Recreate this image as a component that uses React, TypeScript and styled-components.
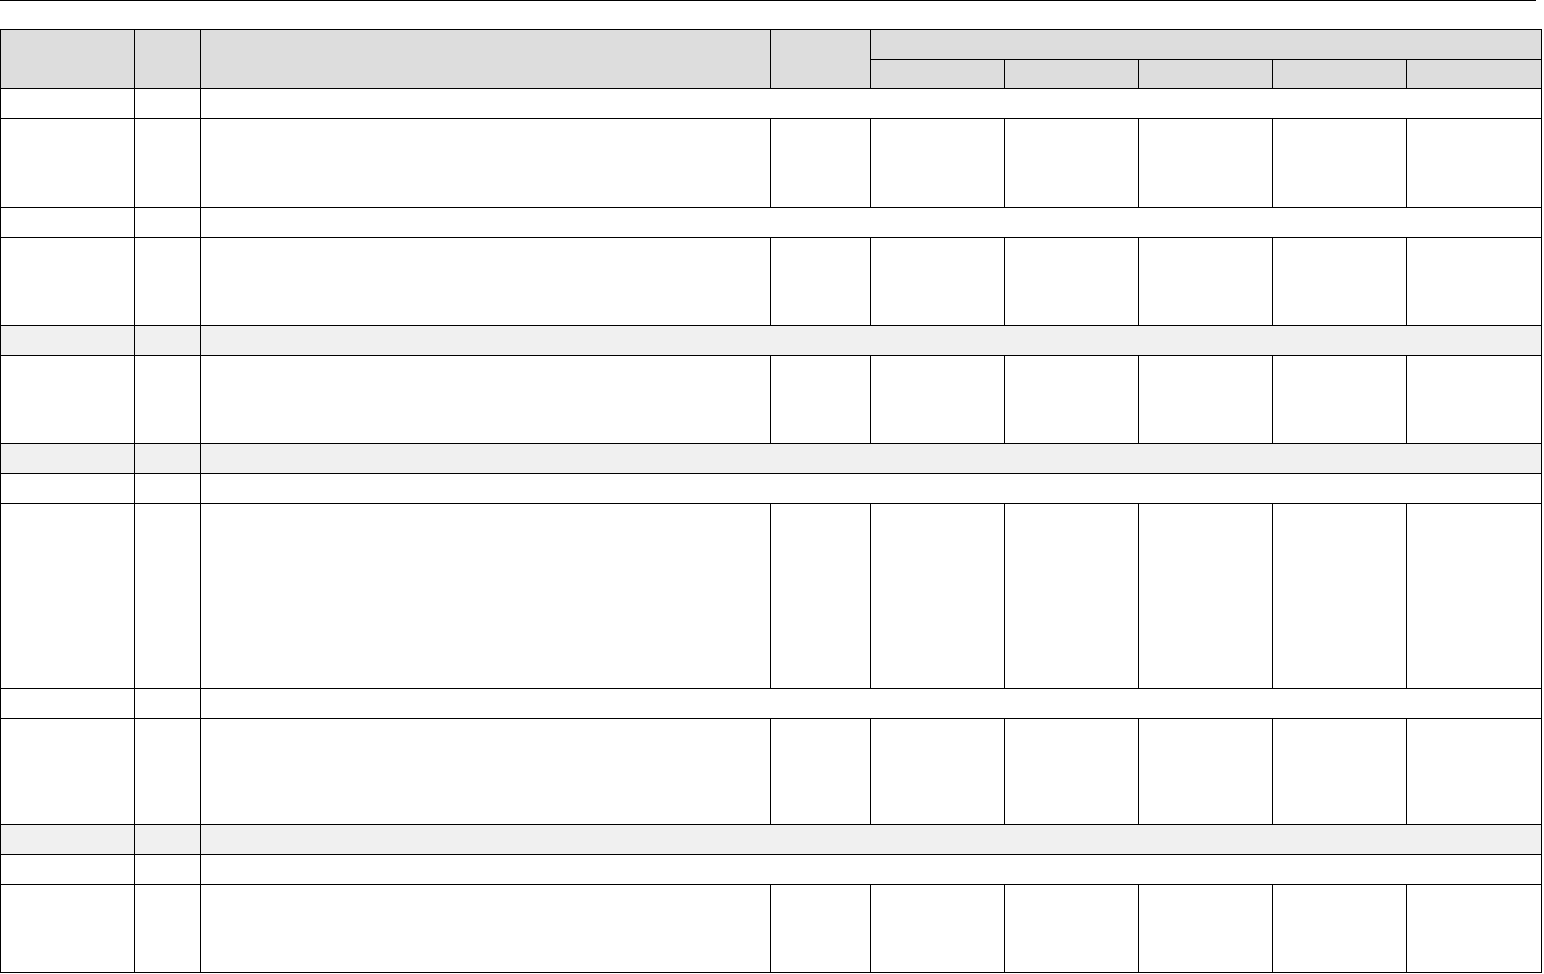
import { FC } from 'react';
import styled, { createGlobalStyle } from 'styled-components';

const GlobalStyle = createGlobalStyle`
	html, body {
		margin: 0;
		padding: 0;
		background: #ffffff;
		font-family: 'Liberation Sans', Arial, sans-serif;
		font-size: 13px;
		color: #000000;
	}
`;

const Page = styled.main`
	display: flex;
	flex-direction: column;
	width: 1544px;
`;

const TopRule = styled.div`
	width: 1536px;
	height: 0;
	border-bottom: 1px solid #000000;
	margin-bottom: 28px;
`;

const Grid = styled.table`
	width: 1541px;
	table-layout: fixed;
	border-collapse: collapse;
	border-spacing: 0;
`;

const HeadCell = styled.th`
	background: #dddddd;
	border: 1px solid #000000;
	padding: 0;
	font-weight: bold;
`;

const Row = styled.tr<{ $h: number; $shaded?: boolean }>`
	height: ${p => p.$h}px;
	background: ${p => (p.$shaded ? '#f0f0f0' : '#ffffff')};
`;

const Cell = styled.td`
	border: 1px solid #000000;
	padding: 0;
	vertical-align: top;
`;

// column widths, border to border
const widths = [134, 66, 570, 100, 134, 134, 134, 134, 135];

type Line =
	| { kind: 'section'; h: number; shaded?: boolean }
	| { kind: 'item'; h: number };

const lines: Line[] = [
	{ kind: 'section', h: 30 },
	{ kind: 'item', h: 89 },
	{ kind: 'section', h: 30 },
	{ kind: 'item', h: 88 },
	{ kind: 'section', h: 30, shaded: true },
	{ kind: 'item', h: 88 },
	{ kind: 'section', h: 30, shaded: true },
	{ kind: 'section', h: 30 },
	{ kind: 'item', h: 185 },
	{ kind: 'section', h: 30 },
	{ kind: 'item', h: 106 },
	{ kind: 'section', h: 30, shaded: true },
	{ kind: 'section', h: 30 },
	{ kind: 'item', h: 88 },
];

const App: FC = () => {
	return (
		<>
			<GlobalStyle />
			<Page>
				<TopRule />
				<Grid>
					<colgroup>
						{widths.map((w, i) => (
							<col key={i} style={{ width: w }} />
						))}
					</colgroup>
					<thead>
						<Row $h={30}>
							<HeadCell rowSpan={2} />
							<HeadCell rowSpan={2} />
							<HeadCell rowSpan={2} />
							<HeadCell rowSpan={2} />
							<HeadCell colSpan={5} />
						</Row>
						<Row $h={29}>
							<HeadCell />
							<HeadCell />
							<HeadCell />
							<HeadCell />
							<HeadCell />
						</Row>
					</thead>
					<tbody>
						{lines.map((line, i) =>
							line.kind === 'section' ? (
								<Row key={i} $h={line.h} $shaded={line.shaded}>
									<Cell />
									<Cell />
									<Cell colSpan={7} />
								</Row>
							) : (
								<Row key={i} $h={line.h}>
									{widths.map((_, j) => (
										<Cell key={j} />
									))}
								</Row>
							),
						)}
					</tbody>
				</Grid>
			</Page>
		</>
	);
};

export default App;
